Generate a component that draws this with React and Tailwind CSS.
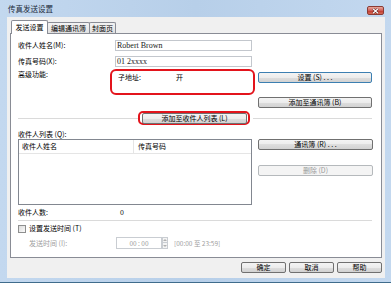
import React from 'react';

const Btn = ({ children, className = '', focus = false, disabled = false }) => {
  const look = disabled
    ? 'border-[#b5b9bc] bg-[#f4f4f4] text-[#9a9a9a]'
    : focus
      ? 'border-[#3c7fb1] bg-[linear-gradient(#f4f4f4,#ececec_50%,#dedede_50%,#d2d2d2)] text-black'
      : 'border-[#707070] bg-[linear-gradient(#f4f4f4,#ececec_50%,#dedede_50%,#d2d2d2)] text-black';
  return (
    <div className={`flex h-[11px] items-center justify-center rounded-[2px] border text-[7px] leading-none ${look} ${className}`}>
      {children}
    </div>
  );
};

const Input = ({ value, className = '' }) => (
  <div className={`flex h-[11px] items-center border border-[#c3c7cd] bg-white pl-[1px] font-['Liberation_Serif',serif] text-[8px] leading-none text-[#222] ${className}`}>
    {value}
  </div>
);

const Tab = ({ children, active = false, className = '' }) =>
  active ? (
    <div className={`relative z-10 mb-[-1px] flex h-[14px] items-center justify-center rounded-t-[2px] border border-b-0 border-[#898c95] bg-white ${className}`}>
      {children}
    </div>
  ) : (
    <div className={`flex h-[11px] items-center justify-center rounded-t-[2px] border border-b-0 border-[#898c95] bg-[linear-gradient(#f3f3f3,#e0e0e0)] ${className}`}>
      {children}
    </div>
  );

export default function App() {
  return (
    <div className="flex h-[283px] w-[391px] flex-col border-b border-[#3f6c8c] bg-[linear-gradient(90deg,#c3d8ef,#b7cfe9_50%,#c3d8ef)] font-['Noto_Sans_CJK_SC','Noto_Sans',sans-serif] text-[7px] leading-none text-black">
      {/* title bar */}
      <div className="flex h-[17px] items-center justify-between pl-[8px] pr-[7px]">
        <span className="text-[7.5px] text-[#1c2a3a]">传真发送设置</span>
        <div className="mt-[4px] flex h-[9px] w-[17px] items-center justify-center rounded-[2px] border border-[#8a3b34] bg-[linear-gradient(#e9a99b,#d0605a_50%,#c0392f_55%,#d66a55)]">
          <svg width="7" height="6" viewBox="0 0 7 6">
            <path d="M1 0.8 L6 5.2 M6 0.8 L1 5.2" stroke="#5a1d18" strokeWidth="2.2" />
            <path d="M1 0.8 L6 5.2 M6 0.8 L1 5.2" stroke="#ffffff" strokeWidth="1.2" />
          </svg>
        </div>
      </div>

      {/* client area */}
      <div className="ml-[7px] flex h-[261px] w-[378px] flex-col bg-[#f0f0f0] px-[3px] pt-[3px]">
        {/* tabs */}
        <div className="flex h-[13px] items-end pl-[1px]">
          <Tab active className="w-[37px]">发送设置</Tab>
          <Tab className="ml-[-1px] w-[43px]">编辑通讯簿</Tab>
          <Tab className="ml-[-1px] w-[27px]">封面页</Tab>
        </div>

        {/* panel */}
        <div className="flex h-[225px] flex-col border border-[#898c95] bg-white pl-[7px] pr-[8px] pt-[6px]">
          <div className="flex h-[11px] items-center">
            <span className="w-[97px]">收件人姓名(M):</span>
            <Input value="Robert Brown" className="w-[137px]" />
          </div>
          <div className="mt-[5px] flex h-[11px] items-center">
            <span className="w-[97px]">传真号码(X):</span>
            <Input value="01 2xxxx" className="w-[137px]" />
          </div>

          <div className="mt-[2px] flex">
            <span className="flex h-[10px] w-[92px] items-center">高级功能:</span>
            <div className="h-[26px] w-[145px] rounded-[6px] border-2 border-[#e3141c] pl-[6px] pt-[2px]">
              <div className="flex h-[8px] items-center">
                <span className="w-[58px]">子地址:</span>
                <span>开</span>
              </div>
            </div>
            <div className="ml-[3px] flex w-[114px] flex-col">
              <Btn focus className="mt-[3px]">设置 (S) . . .</Btn>
              <Btn className="mt-[14px]">添加至通讯簿 (B)</Btn>
            </div>
          </div>

          <div className="mt-[3px] flex h-[14px] items-center">
            <div className="h-px w-[120px] bg-[#dadada]" />
            <div className="flex h-[14px] w-[112px] items-center rounded-[5px] border-2 border-[#e3141c]">
              <Btn className="ml-[2px] w-[105px]">添加至收件人列表 (L)</Btn>
            </div>
            <div className="ml-[3px] mr-[1px] h-px flex-1 bg-[#dadada]" />
          </div>

          <div className="mt-[4px] flex h-[10px] items-center">收件人列表 (Q):</div>

          <div className="flex h-[66px]">
            <div className="flex w-[234px] flex-col border border-[#828790] bg-white">
              <div className="flex h-[14px] items-center border-b border-[#e5e5e5]">
                <span className="flex h-full w-[115px] items-center border-r border-[#e5e5e5] pl-[3px]">收件人姓名</span>
                <span className="pl-[4px]">传真号码</span>
              </div>
            </div>
            <div className="ml-[6px] flex w-[115px] flex-col">
              <Btn>通讯簿 (R) . . .</Btn>
              <Btn disabled className="mt-[15px]">删除 (D)</Btn>
            </div>
          </div>

          <div className="mt-[2px] flex h-[10px] items-center">
            <span className="w-[102px]">收件人数:</span>
            <span>0</span>
          </div>

          <div className="mr-[1px] mt-[3px] h-px bg-[#dadada]" />

          <div className="mt-[3px] flex h-[9px] items-center">
            <div className="h-[8px] w-[8px] border border-[#8e8f8f] bg-[linear-gradient(135deg,#dcdcdc,#fbfbfb)]" />
            <span className="ml-[3px]">设置发送时间 (T)</span>
          </div>

          <div className="ml-[11px] mt-[4px] flex h-[12px] items-center text-[#a0a0a0]">
            <span className="w-[87px]">发送时间 (I):</span>
            <div className="flex h-[12px] w-[46px] items-center justify-center border border-[#c9cdd2] bg-white text-[6.5px] text-[#9a9a9a]">
              00 : 00
            </div>
            <div className="flex h-[12px] w-[6px] flex-col">
              <div className="flex h-[6px] items-center justify-center border border-[#c9cdd2] bg-[#f4f4f4]">
                <svg width="4" height="2" viewBox="0 0 4 2"><path d="M0 2 L2 0 L4 2 Z" fill="#b0b0b0" /></svg>
              </div>
              <div className="flex h-[6px] items-center justify-center border border-t-0 border-[#c9cdd2] bg-[#f4f4f4]">
                <svg width="4" height="2" viewBox="0 0 4 2"><path d="M0 0 L2 2 L4 0 Z" fill="#b0b0b0" /></svg>
              </div>
            </div>
            <span className="ml-[6px] text-[6.5px]">[00:00 至 23:59]</span>
          </div>
        </div>

        {/* dialog buttons */}
        <div className="mt-[4px] flex justify-end gap-[3px]">
          <Btn className="w-[45px]">确定</Btn>
          <Btn className="w-[45px]">取消</Btn>
          <Btn className="w-[45px]">帮助</Btn>
        </div>
      </div>
    </div>
  );
}
